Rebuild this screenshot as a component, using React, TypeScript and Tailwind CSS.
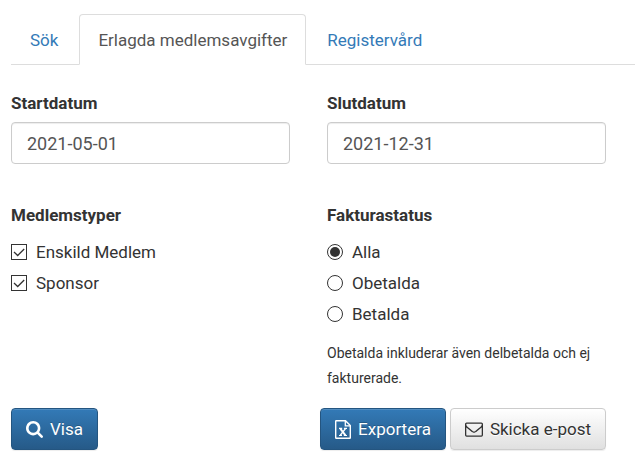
import React, { useState } from 'react';

const tabs = ['Sök', 'Erlagda medlemsavgifter', 'Registervård'];
const memberTypes = ['Enskild Medlem', 'Sponsor'];
const statuses = ['Alla', 'Obetalda', 'Betalda'];

const primaryButton =
  'flex h-[42px] items-center gap-[7px] rounded border border-[#245580] bg-linear-to-b from-[#337ab7] to-[#265a88] px-[14px] text-white shadow-[inset_0_1px_0_rgba(255,255,255,0.15),0_1px_1px_rgba(0,0,0,0.075)] [text-shadow:0_-1px_0_rgba(0,0,0,0.2)]';
const defaultButton =
  'flex h-[42px] items-center gap-[7px] rounded border border-[#ccc] bg-linear-to-b from-white to-[#e0e0e0] px-[14px] text-[#333] shadow-[inset_0_1px_0_rgba(255,255,255,0.15),0_1px_1px_rgba(0,0,0,0.075)] [text-shadow:0_1px_0_#fff]';

const searchPath =
  'M1216 832q0-185-131.5-316.5t-316.5-131.5-316.5 131.5-131.5 316.5 131.5 316.5 316.5 131.5 316.5-131.5 131.5-316.5zm512 832q0 52-38 90t-90 38q-54 0-90-38l-343-342q-179 124-399 124-143 0-273.5-55.5t-225-150-150-225-55.5-273.5 55.5-273.5 150-225 225-150 273.5-55.5 273.5 55.5 225 150 150 225 55.5 273.5q0 220-124 399l343 343q37 37 37 90z';
const envelopePath =
  'M1664 1504v-768q-32 36-69 66-268 206-426 338-51 43-83 67t-86.5 48.5-102.5 24.5h-2q-48 0-102.5-24.5t-86.5-48.5-83-67q-158-132-426-338-37-30-69-66v768q0 13 9.5 22.5t22.5 9.5h1472q13 0 22.5-9.5t9.5-22.5zm0-1051v-24.5l-.5-13-3-12.5-5.5-9-9-7.5-14-2.5h-1472q-13 0-22.5 9.5t-9.5 22.5q0 168 147 284 193 152 401 317 6 5 35 29.5t46 37.5 44.5 31.5 50.5 27.5 43 9h2q20 0 43-9t50.5-27.5 44.5-31.5 46-37.5 35-29.5q208-165 401-317 54-43 100.5-115.5t46.5-131.5zm128-37v1088q0 66-47 113t-113 47h-1472q-66 0-113-47t-47-113v-1088q0-66 47-113t113-47h1472q66 0 113 47t47 113z';

function SearchIcon() {
  return (
    <svg viewBox="64 128 1664 1664" className="size-[17px] shrink-0 fill-current" aria-hidden="true">
      <path d={searchPath} />
    </svg>
  );
}

function ExcelIcon() {
  return (
    <svg viewBox="0 0 16 19" className="h-[19px] w-4 shrink-0 fill-none stroke-current" aria-hidden="true">
      <path d="M.7 1.2Q.7.7 1.2.7H10.5L15.3 5.5V17.8Q15.3 18.3 14.8 18.3H1.2Q.7 18.3.7 17.8Z" strokeWidth="1.4" />
      <path d="M10.3 1V5.8H15" strokeWidth="1.3" />
      <path d="M5.3 8.6 10.5 15.3" strokeWidth="1.9" />
      <path d="M10.5 8.6 5.3 15.3" strokeWidth="1.4" />
      <path d="M4 8.4H7.2M8.9 8.4H12M4 15.5H7M8.8 15.5H12" strokeWidth="1.1" />
    </svg>
  );
}

function EnvelopeIcon() {
  return (
    <svg viewBox="0 0 1792 1792" className="size-[18px] shrink-0 fill-current" aria-hidden="true">
      <path d={envelopePath} />
    </svg>
  );
}

interface DateFieldProps {
  id: string;
  label: string;
  value: string;
  onChange: (value: string) => void;
}

function DateField({ id, label, value, onChange }: DateFieldProps) {
  return (
    <div className="flex flex-col">
      <label htmlFor={id} className="mb-[7px] font-bold">{label}</label>
      <input
        type="text"
        id={id}
        value={value}
        onChange={(e) => onChange(e.target.value)}
        className="h-[42px] w-full rounded border border-[#ccc] px-[15px] text-[18px] text-[#555] shadow-[inset_0_1px_1px_rgba(0,0,0,0.075)] outline-none focus:border-[#66afe9]"
      />
    </div>
  );
}

export default function App() {
  const [activeTab, setActiveTab] = useState(tabs[1]);
  const [startDate, setStartDate] = useState('2021-05-01');
  const [endDate, setEndDate] = useState('2021-12-31');
  const [selectedTypes, setSelectedTypes] = useState<string[]>(memberTypes);
  const [status, setStatus] = useState('Alla');

  const toggleType = (type: string) => {
    setSelectedTypes((prev) => (prev.includes(type) ? prev.filter((t) => t !== type) : [...prev, type]));
  };

  return (
    <div className="bg-white pt-3.5 pl-[11px] font-['Roboto','Liberation_Sans',sans-serif] text-[17px] leading-6 text-[#333]">
      <nav className="flex gap-0.5 border-b border-[#ddd]">
        {tabs.map((tab) => (
          <a
            key={tab}
            href="#"
            onClick={(e) => {
              e.preventDefault();
              setActiveTab(tab);
            }}
            className={
              tab === activeTab
                ? '-mb-px rounded-t border border-[#ddd] border-b-white bg-white px-[18px] pt-[13px] pb-3 text-[#555]'
                : '-mb-px rounded-t border border-transparent px-[18px] pt-[13px] pb-3 text-[#337ab7]'
            }
          >
            {tab}
          </a>
        ))}
      </nav>

      <form onSubmit={(e) => e.preventDefault()} className="pt-[26px] pr-[29px] pb-5">
        <div className="grid grid-cols-2 gap-x-[37px] gap-y-[39px]">
          <DateField id="start" label="Startdatum" value={startDate} onChange={setStartDate} />
          <DateField id="end" label="Slutdatum" value={endDate} onChange={setEndDate} />

          <fieldset>
            <legend className="mb-[13px] font-bold">Medlemstyper</legend>
            <div className="flex flex-col gap-[7px]">
              {memberTypes.map((type) => (
                <label key={type} className="flex items-center gap-[9px]">
                  <span className="grid size-4 shrink-0">
                    <input
                      type="checkbox"
                      checked={selectedTypes.includes(type)}
                      onChange={() => toggleType(type)}
                      className="peer col-start-1 row-start-1 size-4 appearance-none border border-[#333] bg-white"
                    />
                    <svg
                      viewBox="0 0 16 16"
                      className="pointer-events-none invisible col-start-1 row-start-1 size-4 fill-none stroke-[#333] peer-checked:visible"
                      aria-hidden="true"
                    >
                      <path d="M3 8 6.7 11.5 13.2 5" strokeWidth="1.3" />
                    </svg>
                  </span>
                  {type}
                </label>
              ))}
            </div>
          </fieldset>

          <fieldset>
            <legend className="mb-[13px] font-bold">Fakturastatus</legend>
            <div className="flex flex-col gap-[7px]">
              {statuses.map((item) => (
                <label key={item} className="flex items-center gap-[9px]">
                  <input
                    type="radio"
                    name="status"
                    checked={status === item}
                    onChange={() => setStatus(item)}
                    className="size-4 shrink-0 appearance-none rounded-full border border-[#333] bg-white bg-clip-content p-0.5 checked:bg-[#333]"
                  />
                  {item}
                </label>
              ))}
            </div>
            <p className="mt-[15px] text-[14px] leading-[25px]">
              Obetalda inkluderar även delbetalda och ej fakturerade.
            </p>
          </fieldset>
        </div>

        <div className="mt-[17px] flex justify-between">
          <button type="submit" className={primaryButton}>
            <SearchIcon />
            Visa
          </button>
          <div className="flex gap-1">
            <button type="button" className={primaryButton}>
              <ExcelIcon />
              Exportera
            </button>
            <button type="button" className={defaultButton}>
              <EnvelopeIcon />
              Skicka e-post
            </button>
          </div>
        </div>
      </form>
    </div>
  );
}
